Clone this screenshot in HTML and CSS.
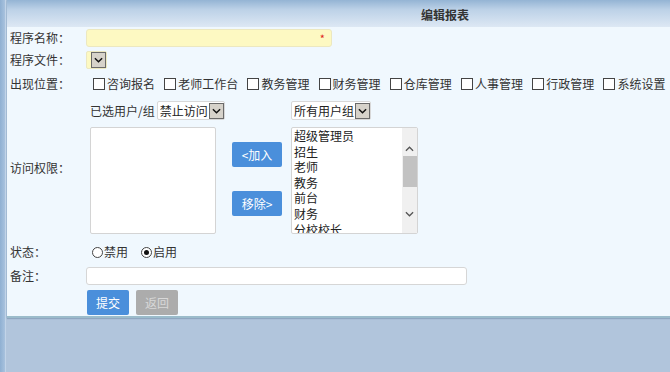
FILE: index.html
```html
<!DOCTYPE html>
<html lang="zh-CN">
<head>
<meta charset="utf-8">
<title>编辑报表</title>
<link rel="stylesheet" href="styles.css">
</head>
<body>
<div class="page">
  <div class="strip"></div>
  <div class="panel">
    <div class="head">编辑报表</div>
    <div class="form">
      <div class="row r1">
        <div class="label">程序名称：</div>
        <div class="field"><div class="input yellow w246"><span class="req">*</span></div></div>
      </div>
      <div class="row r2">
        <div class="label">程序文件：</div>
        <div class="field"><div class="select yellow"><span class="sel-text"></span><span class="arrow"><svg viewBox="0 0 10 6" width="9" height="6"><path d="M1 1 L5 5 L9 1" fill="none" stroke="#111" stroke-width="1.6"/></svg></span></div></div>
      </div>
      <div class="row r3">
        <div class="label">出现位置：</div>
        <div class="field checks">
          <span class="chk"><i class="box"></i>咨询报名</span>
          <span class="chk"><i class="box"></i>老师工作台</span>
          <span class="chk"><i class="box"></i>教务管理</span>
          <span class="chk"><i class="box"></i>财务管理</span>
          <span class="chk"><i class="box"></i>仓库管理</span>
          <span class="chk"><i class="box"></i>人事管理</span>
          <span class="chk"><i class="box"></i>行政管理</span>
          <span class="chk"><i class="box"></i>系统设置</span>
        </div>
      </div>
      <div class="row r4">
        <div class="label">访问权限：</div>
        <div class="field access">
          <div class="col left">
            <div class="col-head"><span class="cap">已选用户/组</span><div class="select white"><span class="sel-text">禁止访问</span><span class="arrow"><svg viewBox="0 0 10 6" width="9" height="6"><path d="M1 1 L5 5 L9 1" fill="none" stroke="#111" stroke-width="1.6"/></svg></span></div></div>
            <div class="listbox lb-left"></div>
          </div>
          <div class="col mid">
            <div class="btn blue add">&lt;加入</div>
            <div class="btn blue rem">移除&gt;</div>
          </div>
          <div class="col right">
            <div class="col-head"><div class="select white"><span class="sel-text">所有用户组</span><span class="arrow"><svg viewBox="0 0 10 6" width="9" height="6"><path d="M1 1 L5 5 L9 1" fill="none" stroke="#111" stroke-width="1.6"/></svg></span></div></div>
            <div class="listbox lb-right">
              <div class="items">
                <div>超级管理员</div>
                <div>招生</div>
                <div>老师</div>
                <div>教务</div>
                <div>前台</div>
                <div>财务</div>
                <div>分校校长</div>
              </div>
              <div class="sbar">
                <svg class="up" viewBox="0 0 10 6" width="9" height="6"><path d="M1 5 L5 1 L9 5" fill="none" stroke="#555" stroke-width="1.4"/></svg>
                <div class="thumb"></div>
                <svg class="down" viewBox="0 0 10 6" width="9" height="6"><path d="M1 1 L5 5 L9 1" fill="none" stroke="#555" stroke-width="1.4"/></svg>
              </div>
            </div>
          </div>
        </div>
      </div>
      <div class="row r5">
        <div class="label">状态：</div>
        <div class="field radios">
          <span class="rad"><i class="circle"></i>禁用</span>
          <span class="rad"><i class="circle on"></i>启用</span>
        </div>
      </div>
      <div class="row r6">
        <div class="label">备注：</div>
        <div class="field"><div class="input white w381"></div></div>
      </div>
      <div class="row r7">
        <div class="label"></div>
        <div class="field actions">
          <div class="btn blue submit">提交</div>
          <div class="btn gray back">返回</div>
        </div>
      </div>
    </div>
  </div>
</div>
</body>
</html>
```
FILE: styles.css
```css
html, body {
  margin: 0;
  padding: 0;
  overflow: hidden;
}
body {
  background: #b1c5dc;
  font-family: "Noto Sans CJK SC", "Noto Sans", sans-serif;
  font-size: 12px;
  color: #333;
  width: 670px;
  height: 372px;
}
.page {
  display: flex;
  height: 372px;
  align-items: flex-start;
}
.strip {
  width: 5px;
  height: 372px;
  background: linear-gradient(90deg, #8fb0d2, #a8c2de);
  border-right: 1px solid #c2d4e8;
  margin-right: 1px;
  flex: none;
}
.panel {
  width: 876px;
  flex: none;
  background: #f0f8fe;
  border-bottom: 2px solid #9bbccb;
  box-shadow: 0 1px 1px rgba(80,110,140,0.35), -1px 0 0 #a8c0d8;
}
.head {
  height: 27px;
  line-height: 30px;
  text-align: center;
  font-weight: bold;
  color: #333;
  background: linear-gradient(180deg, #94b4d4 0%, #bcd1e7 35%, #dde8f4 100%);
}
.form {
  display: flex;
  flex-direction: column;
  padding: 2px 0 1px 0;
}
.row {
  display: flex;
  align-items: center;
}
.label {
  width: 76px;
  padding-left: 3px;
  flex: none;
  line-height: 18px;
  color: #333;
}
.field {
  display: flex;
  align-items: center;
}
.r1 { height: 18px; }
.r2 { height: 18px; margin-top: 4px; }
.r3 { height: 22px; margin-top: 4px; }
.r4 { height: 135px; margin-top: 5px; }
.r5 { height: 18px; margin-top: 8px; }
.r6 { height: 18px; margin-top: 6px; }
.r7 { height: 25px; margin-top: 5px; }

.input {
  height: 16px;
  border: 1px solid #ddd;
  border-radius: 3px;
  box-sizing: content-box;
  position: relative;
}
.input.yellow {
  background: #fdf9c2;
  border-color: #ece8c0;
}
.input.white {
  background: #fff;
  border-color: #d6d6d6;
}
.w246 { width: 244px; }
.w381 { width: 379px; }
.req {
  position: absolute;
  right: 6px;
  top: 1px;
  color: #e02020;
  font-size: 11px;
  line-height: 14px;
}

.select {
  display: flex;
  align-items: center;
  flex: none;
  white-space: nowrap;
  height: 19px;
  box-sizing: border-box;
  border: 1px solid #d8d8d8;
  border-radius: 2px;
}
.select.yellow {
  background: #fdf9c2;
  border-color: #ece8c0;
  height: 18px;
  padding-left: 3px;
}
.select.white {
  background: #fff;
  padding-left: 2px;
}
.sel-text {
  line-height: 17px;
  color: #222;
  white-space: nowrap;
  flex: none;
}
.arrow {
  width: 15px;
  height: 16px;
  flex: none;
  box-sizing: border-box;
  background: #d6d2ca;
  border: 1px solid #6a6a6a;
  display: flex;
  align-items: center;
  justify-content: center;
  margin-left: 1px;
}

.checks { padding-left: 7px; }
.chk {
  display: inline-flex;
  align-items: center;
  margin-right: 9.2px;
  white-space: nowrap;
  line-height: 18px;
}
.box {
  width: 12px;
  height: 12px;
  box-sizing: border-box;
  border: 1px solid #444;
  background: #fff;
  margin-right: 2px;
}

.access {
  align-items: flex-start;
  height: 135px;
  padding-left: 4px;
}
.col { display: flex; flex-direction: column; flex: none; }
.col-head {
  display: flex;
  align-items: center;
  height: 19px;
  margin-top: 1px;
  white-space: nowrap;
}
.cap { margin-right: 2px; line-height: 19px; flex: none; }
.left { width: 132px; }
.left .select { width: 68px; }
.right .select { width: 80px; }
.listbox {
  margin-top: 7px;
  height: 107px;
  box-sizing: border-box;
  background: #fff;
  border: 1px solid #d4d4d4;
  border-radius: 2px;
}
.lb-left { width: 126px; }
.lb-right {
  width: 127px;
  display: flex;
  overflow: hidden;
}
.items {
  flex: 1;
  padding: 0 0 0 2px;
  overflow: hidden;
}
.items div {
  line-height: 15.6px;
  height: 15.6px;
  white-space: nowrap;
  color: #222;
}
.sbar {
  width: 15px;
  background: #f0f0f0;
  flex: none;
  display: flex;
  flex-direction: column;
  align-items: center;
}
.sbar .up { margin-top: 18px; }
.sbar .thumb {
  width: 14px;
  height: 31px;
  background: #c2c2c2;
  margin-top: 4px;
}
.sbar .down { margin-top: 24px; }

.mid {
  width: 50px;
  margin-left: 10px;
  margin-right: 9px;
  padding-top: 42px;
}
.btn {
  height: 25px;
  line-height: 25px;
  text-align: center;
  border-radius: 2px;
  color: #fff;
}
.blue { background: #4a8fdb; }
.gray { background: #acacac; color: #d8d8d8; }
.mid .rem { margin-top: 24px; }

.radios { padding-left: 6px; }
.rad {
  display: inline-flex;
  align-items: center;
  margin-right: 13px;
  line-height: 18px;
}
.circle {
  width: 11px;
  height: 11px;
  box-sizing: border-box;
  border: 1px solid #444;
  border-radius: 50%;
  background: #fff;
  margin-right: 1px;
  position: relative;
}
.circle.on::after {
  content: "";
  position: absolute;
  left: 2px;
  top: 2px;
  width: 5px;
  height: 5px;
  border-radius: 50%;
  background: #111;
}

.actions { padding-left: 1px; }
.actions .btn { width: 42px; }
.actions .back { margin-left: 7px; }
```
